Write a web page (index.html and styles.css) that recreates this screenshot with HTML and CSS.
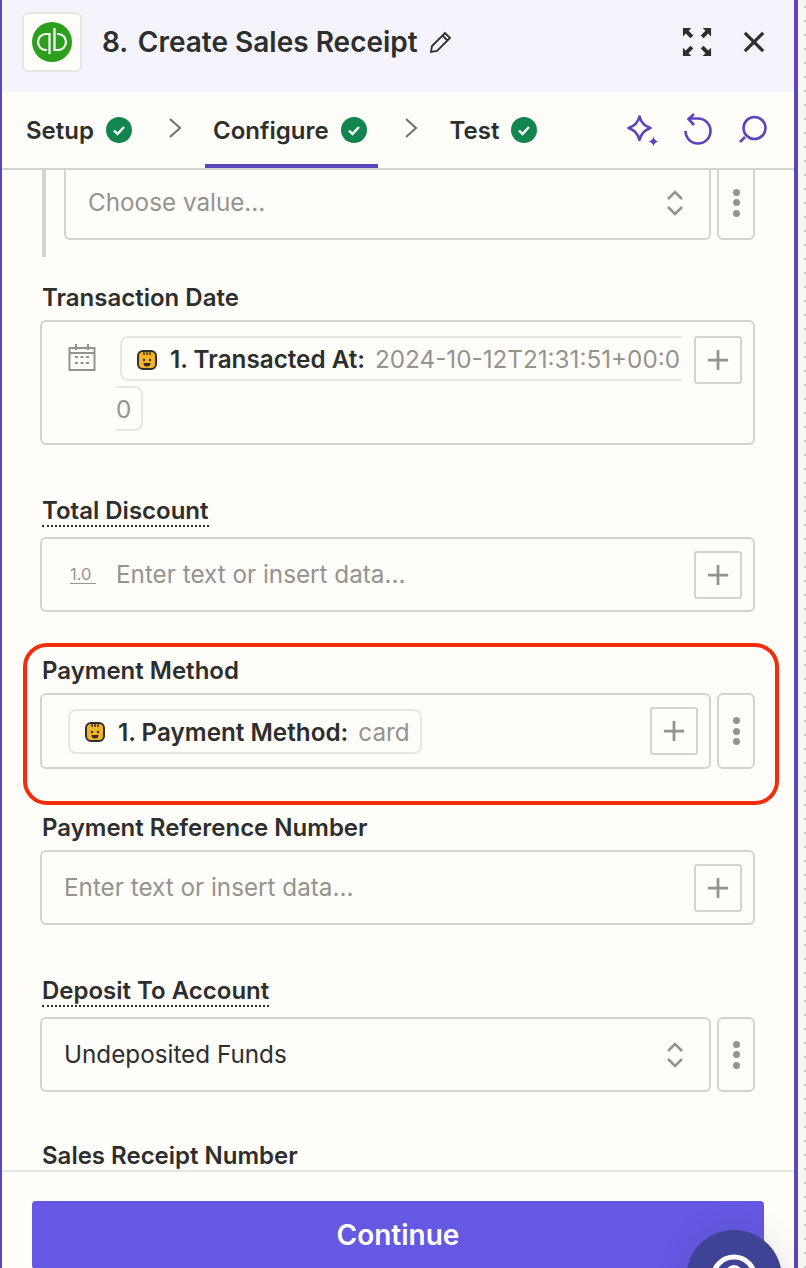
FILE: index.html
```html
<!DOCTYPE html>
<html lang="en">
<head>
  <meta charset="UTF-8" />
  <title>Create Sales Receipt</title>
  <link rel="stylesheet" href="styles.css">
</head>
<body>
  <svg class="sprites" width="0" height="0">
    <symbol id="mascot" viewBox="0 0 20 20">
      <rect x="1" y="1" width="18" height="18" rx="5" fill="#f5b423" stroke="#2d2e2e" stroke-width="2"/>
      <path d="M7 1v4M10 1v4M13 1v4" stroke="#2d2e2e" stroke-width="1.4"/>
      <circle cx="7" cy="10" r="1.2" fill="#2d2e2e"/>
      <circle cx="13" cy="10" r="1.2" fill="#2d2e2e"/>
      <path d="M6.500 13h7a3.500 3.500 0 0 1-7 0z" fill="#2d2e2e"/>
    </symbol>
    <symbol id="check" viewBox="0 0 26 26">
      <circle cx="13" cy="13" r="13" fill="#13864f"/>
      <path d="M8 13.500l3.500 3.500L18 10" fill="none" stroke="#fff" stroke-width="2.400"/>
    </symbol>
    <symbol id="chev" viewBox="0 0 14 22">
      <path d="M2 2l10 9-10 9" fill="none" stroke="#6f6e6a" stroke-width="2"/>
    </symbol>
    <symbol id="updown" viewBox="0 0 18 28">
      <path d="M2 10l7-7 7 7M2 18l7 7 7-7" fill="none" stroke="#95938e" stroke-width="2.600"/>
    </symbol>
    <symbol id="plus" viewBox="0 0 24 24">
      <path d="M12 1v22M1 12h22" stroke="#95938e" stroke-width="3"/>
    </symbol>
  </svg>

  <div class="panel">
    <header class="head">
      <div class="app-logo">
        <svg viewBox="0 0 40 40" width="40" height="40">
          <circle cx="20" cy="20" r="20" fill="#2ca01c"/>
          <path d="M17.500 32V12H14a8 8 0 0 0 0 16h1M22.500 6v22H26a8 8 0 0 0 0-16h-1" fill="none" stroke="#fff" stroke-width="2.200"/>
        </svg>
      </div>
      <h1 class="title"><span class="step">8.</span> Create Sales Receipt</h1>
      <svg class="pencil" viewBox="0 0 24 24" width="24" height="24">
        <path d="M2 22l1-6L16 3l5 5L8 21z M13.500 5.500l5 5" fill="none" stroke="#2d2e2e" stroke-width="1.800"/>
      </svg>
      <svg class="expand" viewBox="0 0 32 32" width="30" height="30">
        <path d="M1 10V1h9L7 4l5 5-3 3-5-5zM31 10V1h-9l3 3-5 5 3 3 5-5zM1 22v9h9l-3-3 5-5-3-3-5 5zM31 22v9h-9l3-3-5-5 3-3 5 5z" fill="#2d2e2e"/>
      </svg>
      <svg class="close" viewBox="0 0 24 24" width="22" height="22">
        <path d="M2 2l20 20M22 2L2 22" stroke="#2d2e2e" stroke-width="3.400"/>
      </svg>
    </header>

    <nav class="tabs">
      <div class="tab">Setup <svg class="ok"><use href="#check"/></svg></div>
      <svg class="sep sep-a"><use href="#chev"/></svg>
      <div class="tab tab-active">Configure <svg class="ok"><use href="#check"/></svg></div>
      <svg class="sep sep-b"><use href="#chev"/></svg>
      <div class="tab">Test <svg class="ok"><use href="#check"/></svg></div>
      <div class="tools">
        <svg viewBox="0 0 34 34" width="34" height="34">
          <path d="M14.500 3.500c1.500 6 4.500 9.500 11 11.500-6.500 2-9.500 5.500-11 12-1.500-6.500-4.500-10-11-12 6.500-2 9.500-5.500 11-11.500z" fill="none" stroke="#5a45bd" stroke-width="2.600" stroke-linejoin="round"/>
          <path d="M28.500 23.500c.5 2.800 2.200 4.500 5 5-2.800.5-4.500 2.200-5 5-.5-2.800-2.200-4.500-5-5 2.800-.5 4.500-2.200 5-5z" fill="#5a45bd"/>
        </svg>
        <svg viewBox="0 0 30 34" width="30" height="34">
          <path d="M2.500 18A12.500 12.500 0 1 0 15 5.500H6.500M11 1L5.500 6l5.500 6" fill="none" stroke="#5a45bd" stroke-width="2.600"/>
        </svg>
        <svg viewBox="0 0 30 32" width="30" height="32">
          <circle cx="17.500" cy="14" r="11" fill="none" stroke="#5a45bd" stroke-width="2.600"/>
          <path d="M8 23l-5 5" stroke="#5a45bd" stroke-width="2.600"/>
        </svg>
      </div>
    </nav>

    <main class="scroll">
      <div class="group">
        <div class="row">
          <div class="box box-mid">
            <span class="hint">Choose value...</span>
            <svg class="updown"><use href="#updown"/></svg>
          </div>
          <div class="more"><i></i><i></i><i></i></div>
        </div>
      </div>

      <section class="field">
        <label class="label">Transaction Date</label>
        <div class="box box-tall">
          <svg class="cal" viewBox="0 0 28 28" width="28" height="28">
            <path d="M1.500 5h25v22h-25zM1.500 10h25M8 1v6M20 1v6" fill="none" stroke="#95938e" stroke-width="2"/>
            <path d="M7 14h3M12.500 14h3M18 14h3M7 20h3M12.500 20h3M18 20h3" stroke="#95938e" stroke-width="2"/>
          </svg>
          <div class="tokens">
            <span class="pill pill-cut"><svg class="face"><use href="#mascot"/></svg><b>1. Transacted At:</b><em>2024-10-12T21:31:51+00:0</em></span>
            <span class="pill pill-rest"><em>0</em></span>
          </div>
          <button class="add"><svg><use href="#plus"/></svg></button>
        </div>
      </section>

      <section class="field field-wide">
        <label class="label label-tip">Total Discount</label>
        <div class="box">
          <span class="num">1.0</span>
          <span class="hint">Enter text or insert data...</span>
          <button class="add"><svg><use href="#plus"/></svg></button>
        </div>
      </section>

      <section class="field field-mark">
        <div class="mark"></div>
        <label class="label">Payment Method</label>
        <div class="row">
          <div class="box box-mid">
            <span class="pill pill-inset"><svg class="face"><use href="#mascot"/></svg><b>1. Payment Method:</b><em>card</em></span>
            <button class="add"><svg><use href="#plus"/></svg></button>
          </div>
          <div class="more"><i></i><i></i><i></i></div>
        </div>
      </section>

      <section class="field">
        <label class="label">Payment Reference Number</label>
        <div class="box">
          <span class="hint">Enter text or insert data...</span>
          <button class="add"><svg><use href="#plus"/></svg></button>
        </div>
      </section>

      <section class="field field-wide">
        <label class="label label-tip">Deposit To Account</label>
        <div class="row">
          <div class="box box-mid">
            <span class="value">Undeposited Funds</span>
            <svg class="updown"><use href="#updown"/></svg>
          </div>
          <div class="more"><i></i><i></i><i></i></div>
        </div>
      </section>

      <section class="field field-wide">
        <label class="label">Sales Receipt Number</label>
      </section>
    </main>

    <footer class="foot">
      <button class="continue">Continue</button>
    </footer>
  </div>

  <div class="help">
    <svg viewBox="0 0 64 64" width="64" height="64">
      <circle cx="32" cy="32" r="21" fill="none" stroke="#fff" stroke-width="5"/>
      <circle cx="32" cy="28" r="9" fill="#fff"/>
    </svg>
  </div>
</body>
</html>
```

FILE: styles.css
```css
* { box-sizing: border-box; margin: 0; padding: 0; }

html, body {
  height: 100%;
  overflow: hidden;
}

body {
  font-family: Inter, "Liberation Sans", sans-serif;
  color: #2d2e2e;
  background-color: #f7f6f2;
  background-image: radial-gradient(#c9c7c1 0.8px, transparent 1px);
  background-size: 14px 14px;
}

.sprites { position: absolute; }

.panel {
  width: 798px;
  height: 1268px;
  display: flex;
  flex-direction: column;
  background: #fffdf9;
  border-left: 2px solid #5a45bd;
  border-right: 4px solid #5a45bd;
}

/* header */
.head {
  height: 92px;
  flex: none;
  display: flex;
  align-items: center;
  padding: 0 29px 8px 20px;
  background: #f5f4fc;
}

.app-logo {
  width: 60px;
  height: 60px;
  display: flex;
  align-items: center;
  justify-content: center;
  background: #fffdf9;
  border: 2px solid #e8e6e1;
  border-radius: 6px;
}

.title {
  margin-left: 20px;
  font-size: 28px;
  font-weight: 600;
}

.step { margin-right: 2.5px; }

.pencil { margin-left: 11px; }
.expand { margin-left: auto; }
.close { margin-left: 31px; }

/* tabs */
.tabs {
  height: 78px;
  flex: none;
  display: flex;
  align-items: stretch;
  padding-left: 24px;
  border-bottom: 2px solid #d5d3ce;
}

.tab {
  display: flex;
  align-items: center;
  gap: 12px;
  height: 78px;
  padding-bottom: 2px;
  font-size: 24px;
  font-weight: 600;
}

.ok { width: 26px; height: 26px; }

.sep { width: 14px; height: 22px; }
.sep-a { margin: 25px 23px 0 36px; }
.sep-b { margin: 25px 32px 0 26px; }

.tab-active {
  position: relative;
  padding: 0 11px 2px 8px;
}

.tab-active::after {
  content: "";
  position: absolute;
  left: 0;
  right: 0;
  bottom: 2px;
  height: 4px;
  background: #5a45bd;
}

.tools {
  display: flex;
  align-items: center;
  gap: 24px;
  margin-left: auto;
  padding-right: 27px;
}

/* form */
.scroll {
  flex: 1;
  min-height: 0;
  overflow: hidden;
  padding: 0 38px;
}

.group {
  height: 92px;
  margin-top: -5px;
  margin-left: 2px;
  padding-left: 18px;
  border-left: 4px solid #d5d3ce;
}

.row {
  display: flex;
  gap: 6px;
}

.field { margin-top: 45px; }
.group + .field { margin-top: 27px; }
.field-wide { margin-top: 50px; }

.field-mark { position: relative; }
.field-mark .box { height: 76px; }

.mark {
  position: absolute;
  top: -14px;
  left: -17px;
  width: 756px;
  height: 162px;
  border: 4px solid #f32c0c;
  border-radius: 24px;
  pointer-events: none;
}

.label {
  display: block;
  height: 28px;
  margin-bottom: 8px;
  padding-left: 2px;
  font-size: 24px;
  line-height: 28px;
  font-weight: 600;
}

.label-tip {
  width: fit-content;
  height: 32px;
  margin-bottom: 10px;
  margin-left: 2px;
  padding: 2px 0 0;
  border-bottom: 2px dotted #2d2e2e;
}

.box {
  position: relative;
  display: flex;
  align-items: center;
  height: 75px;
  width: 715px;
  padding: 0 11px 0 22px;
  background: #fffdf9;
  border: 2px solid #d5d3ce;
  border-radius: 6px;
  font-size: 24.25px;
}

.box-mid {
  width: 671px;
  flex: none;
}

.group .box-mid { width: 647px; }

.box-tall {
  height: 125px;
  align-items: flex-start;
  padding-top: 14px;
}

.hint { color: #95938e; }
.value { color: #2d2e2e; }

.num {
  width: 26px;
  margin: 0 20px 0 6px;
  font-size: 16.5px;
  color: #95938e;
  border-bottom: 1px solid #95938e;
  line-height: 18px;
}

.updown {
  width: 18px;
  height: 28px;
  margin-left: auto;
  margin-right: 14px;
}

.more {
  width: 38px;
  flex: none;
  display: flex;
  flex-direction: column;
  align-items: center;
  justify-content: center;
  gap: 3.5px;
  border: 2px solid #d5d3ce;
  border-radius: 6px;
  background: #fffdf9;
}

.more i {
  width: 7px;
  height: 7px;
  border-radius: 50%;
  background: #95938e;
}

.add {
  width: 48px;
  height: 48px;
  flex: none;
  margin-left: auto;
  display: flex;
  align-items: center;
  justify-content: center;
  background: #fffdf9;
  border: 2px solid #d5d3ce;
  border-radius: 3px;
}

.add svg { width: 22px; height: 22px; }

.cal {
  flex: none;
  margin: 7px 20px 0 4px;
}

.tokens {
  width: 566px;
  flex: none;
  display: flex;
  flex-direction: column;
  align-items: flex-start;
  gap: 5px;
}

.pill {
  display: inline-flex;
  align-items: center;
  height: 45px;
  padding: 2px 10px 0 15px;
  background: #fffdf9;
  border: 2px solid #e8e6e1;
  border-radius: 8px;
  white-space: nowrap;
}

.pill b { font-weight: 600; margin-left: 13px; }
.pill em { font-style: normal; color: #95938e; margin-left: 10px; }

.face { width: 20px; height: 20px; flex: none; }

.pill-inset { margin-left: 4px; }

.pill-cut {
  width: 562px;
  margin-left: 4px;
  padding-right: 0;
  border-right: 0;
  border-radius: 8px 0 0 8px;
  overflow: hidden;
}

.pill-rest {
  width: 27px;
  padding: 2px 0 0;
  border-left: 0;
  border-radius: 0 8px 8px 0;
}

.pill-rest em { margin-left: 0; }

/* footer */
.foot {
  flex: none;
  height: 98px;
  padding: 29px 30px 0;
  border-top: 2px solid #e8e6e1;
}

.continue {
  display: block;
  width: 100%;
  height: 68px;
  border: 0;
  border-radius: 4px;
  background: #6558e3;
  color: #fff;
  font: 600 28px Inter, "Liberation Sans", sans-serif;
}

.help {
  position: absolute;
  left: 686px;
  top: 1230px;
  width: 96px;
  height: 96px;
  display: flex;
  align-items: center;
  justify-content: center;
  border-radius: 50%;
  background: #3e4396;
  box-shadow: 0 0 30px rgba(60, 60, 90, 0.15);
}
```
